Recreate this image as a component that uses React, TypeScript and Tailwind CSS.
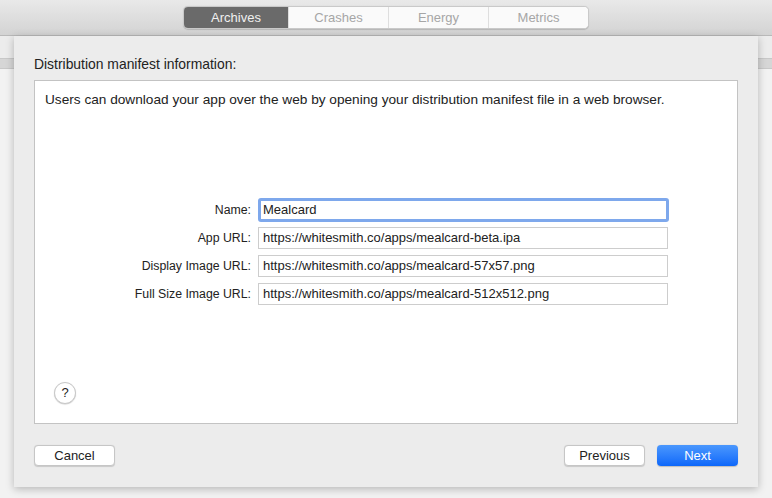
import React from "react"

const tabs = ["Archives", "Crashes", "Energy", "Metrics"]

const fields = [
  { label: "App URL:", value: "https://whitesmith.co/apps/mealcard-beta.ipa" },
  { label: "Display Image URL:", value: "https://whitesmith.co/apps/mealcard-57x57.png" },
  { label: "Full Size Image URL:", value: "https://whitesmith.co/apps/mealcard-512x512.png" },
]

export default function App() {
  return (
    <div
      className="relative w-[772px] h-[498px] overflow-hidden bg-[#f2f2f2] text-[13px] text-[#222]"
      style={{ fontFamily: '"Liberation Sans", Arial, sans-serif' }}
    >
      {/* toolbar */}
      <div className="h-[36px] bg-gradient-to-b from-[#e9e9e9] to-[#d3d3d3] border-b border-[#b9b9b9] flex justify-center pt-[6px]">
        <div className="flex h-[23px] rounded-[5px] border border-[#c9c9c9] bg-white overflow-hidden shadow-[0_0.5px_1px_rgba(0,0,0,0.15)]">
          {tabs.map((t, i) => (
            <div
              key={t}
              className={
                i === 0
                  ? "w-[104px] flex items-center justify-center bg-[#6a6a6a] text-[#f0f0f0]"
                  : "w-[100px] flex items-center justify-center text-[#a6a6a6] border-l border-[#dedede] bg-[#fafafa]"
              }
            >
              {t}
            </div>
          ))}
        </div>
      </div>

      {/* window strip behind the sheet */}
      <div className="h-[22px] bg-[#ececec]" />
      <div className="h-[11px] bg-[#d6d6d6] border-y border-[#c8c8c8]" />

      {/* sheet */}
      <div className="absolute left-[14px] top-[36px] w-[744px] h-[451px] bg-[#ececec] shadow-[0_2px_8px_rgba(0,0,0,0.25)] flex flex-col px-[20px]">
        <div className="pt-[20px] pb-[8px] leading-[16px] text-[13.9px]">Distribution manifest information:</div>
        <div className="h-[344px] bg-white border border-[#c3c3c3] flex flex-col px-[10px]">
          <div className="pt-[11px] leading-[16px] text-[13.65px]">
            Users can download your app over the web by opening your distribution manifest file in a web browser.
          </div>
          <div className="mt-[88px] flex flex-col">
            <div className="h-[28px] flex items-center">
              <div className="w-[213px] text-right pr-[7px] text-[12.3px]">Name:</div>
              <div className="w-[411px] h-[24px] rounded-[3px] border-[3px] border-[#7ea8ec] bg-white flex items-center px-[2px]">
                Mealcard
              </div>
            </div>
            {fields.map((f) => (
              <div key={f.label} className="h-[28px] flex items-center">
                <div className="w-[213px] text-right pr-[7px] text-[12.3px]">{f.label}</div>
                <div className="w-[410px] h-[22px] border border-[#cdcdcd] bg-white flex items-center px-[4px]">
                  {f.value}
                </div>
              </div>
            ))}
          </div>
          <div className="mt-auto mb-[19px] ml-[9px] w-[22px] h-[22px] rounded-full bg-white border border-[#c8c8c8] shadow-[0_0.5px_1px_rgba(0,0,0,0.2)] flex items-center justify-center text-[13px]">
            ?
          </div>
        </div>
        <div className="mt-[21px] flex items-center">
          <button className="w-[81px] h-[21px] rounded-[4px] bg-white border border-[#c6c6c6] shadow-[0_0.5px_1px_rgba(0,0,0,0.15)] text-[13px] leading-none">
            Cancel
          </button>
          <div className="flex-1" />
          <button className="w-[81px] h-[21px] rounded-[4px] bg-white border border-[#c6c6c6] shadow-[0_0.5px_1px_rgba(0,0,0,0.15)] text-[13px] leading-none">
            Previous
          </button>
          <button className="ml-[12px] w-[81px] h-[21px] rounded-[4px] bg-gradient-to-b from-[#4a97fd] to-[#0b67fa] text-white text-[13px] leading-none shadow-[0_0.5px_1px_rgba(0,0,0,0.2)]">
            Next
          </button>
        </div>
      </div>
    </div>
  )
}
